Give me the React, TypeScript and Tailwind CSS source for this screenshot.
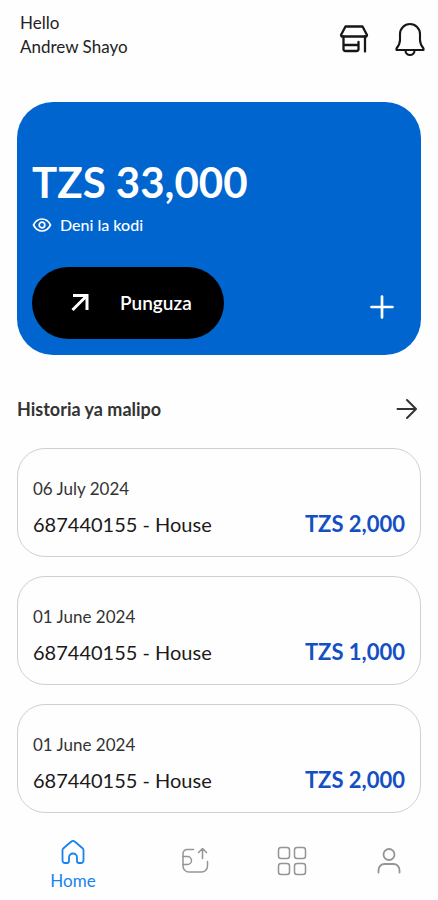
import React from 'react';

interface Payment {
  id: number;
  date: string;
  reference: string;
  amount: string;
}

const payments: Payment[] = [
  { id: 1, date: '06 July 2024', reference: '687440155 - House', amount: 'TZS 2,000' },
  { id: 2, date: '01 June 2024', reference: '687440155 - House', amount: 'TZS 1,000' },
  { id: 3, date: '01 June 2024', reference: '687440155 - House', amount: 'TZS 2,000' },
];

const Icon = ({ className, viewBox = '0 0 32 32', strokeWidth = 2, children }: any) => (
  <svg
    className={className}
    viewBox={viewBox}
    fill="none"
    stroke="currentColor"
    strokeWidth={strokeWidth}
    strokeLinecap="round"
    strokeLinejoin="round"
    aria-hidden="true"
  >
    {children}
  </svg>
);

const StoreIcon = () => (
  <Icon className="size-8" strokeWidth={2.3}>
    <path d="M7.5 3.5h17L29 12l-.5 1.500h-25L3 12z" />
    <path d="M5.500 13.500v12.500a2 2 0 0 0 2 2h11a2 2 0 0 0 2-2v-7M5.500 22h15M27 13.500V28.500" />
  </Icon>
);

const BellIcon = () => (
  <Icon className="size-9" viewBox="0 0 36 36" strokeWidth={2.1}>
    <path d="M8 19v-6a10 10 0 0 1 20 0v6c0 4 1.500 6 3.500 8.500V29H4.500v-1.500C6.500 25 8 23 8 19z" />
    <path d="M13.500 29.500a4.500 4.500 0 0 0 9 0" />
  </Icon>
);

const PaymentCard = ({ payment }: { payment: Payment }) => (
  <li className="rounded-[28px] border border-[#cfcfcf] px-[15px] pt-[30px] pb-[19px]">
    <p className="text-[17px] leading-5 text-[#333]">{payment.date}</p>
    <div className="mt-3 flex items-center justify-between leading-[26px]">
      <span className="text-xl leading-[26px] text-[#1a1a1a]">{payment.reference}</span>
      <span className="text-[22px] leading-[26px] font-bold text-[#1450c4]">{payment.amount}</span>
    </div>
  </li>
);

const BottomNav = () => (
  <nav className="mt-6 grid grid-cols-[3fr_2fr_2fr_2fr] items-start text-[#959595]">
    <a href="#home" className="flex flex-col items-center text-[#1683ee]">
      <Icon className="size-8" strokeWidth={1.8}>
        <path d="M5.500 13.500a3 3 0 0 1 1-2.300l7.500-6.400a3 3 0 0 1 4 0l7.500 6.400a3 3 0 0 1 1 2.300V23.500a2.500 2.500 0 0 1-2.500 2.500h-2a2 2 0 0 1-2-2v-3.500a4 4 0 0 0-8 0V24a2 2 0 0 1-2 2H8a2.500 2.500 0 0 1-2.500-2.500z" />
      </Icon>
      <span className="text-[17px] leading-6">Home</span>
    </a>
    <a href="#payments" aria-label="Payments" className="flex justify-center pt-2">
      <Icon className="size-8" strokeWidth={1.5}>
        <path d="M14.500 4.500H8a4 4 0 0 0-4 4V21a6 6 0 0 0 6 6h12.500a6 6 0 0 0 6-6v-4.500" />
        <path d="M4 11.500h4.500a4 4 0 0 1 0 8H4M23.500 13.500V4M19.500 7.500l4-4 4 4" />
      </Icon>
    </a>
    <a href="#services" aria-label="Services" className="flex justify-center pt-2">
      <Icon className="size-8" strokeWidth={1.5}>
        <rect x="2.500" y="2.500" width="11" height="11" rx="2.500" />
        <rect x="18.500" y="2.500" width="11" height="11" rx="2.500" />
        <rect x="2.500" y="18.500" width="11" height="11" rx="2.500" />
        <rect x="18.500" y="18.500" width="11" height="11" rx="2.500" />
      </Icon>
    </a>
    <a href="#profile" aria-label="Profile" className="flex justify-center pt-2">
      <Icon className="size-8" strokeWidth={1.8}>
        <circle cx="16" cy="9.500" r="5.500" />
        <path d="M5.500 27.500V25a6 6 0 0 1 6-6h9a6 6 0 0 1 6 6v2.500" />
      </Icon>
    </a>
  </nav>
);

const App: React.FC = () => {
  return (
    <div className="min-h-screen bg-[#fefefe] font-['Lato',sans-serif] text-[#222]">
      <header className="flex items-start justify-between pt-[11px] pr-2.5 pl-5">
        <div className="text-[17px] leading-6">
          <p>Hello</p>
          <p>Andrew Shayo</p>
        </div>
        <div className="flex items-center gap-[22px] pt-2.5 text-[#161616]">
          <button type="button" aria-label="Store"><StoreIcon /></button>
          <button type="button" aria-label="Notifications"><BellIcon /></button>
        </div>
      </header>

      <main className="px-[17px]">
        <section className="mt-[43px] rounded-[36px] bg-[#0165cf] px-[15px] pt-14 pb-4 text-white">
          <h1 className="text-[42px] leading-[48px] font-bold">TZS 33,000</h1>
          <div className="mt-[7px] flex items-center gap-2">
            <Icon className="size-5" viewBox="0 0 20 20" strokeWidth={1.7}>
              <path d="M1.500 10C3.500 6 6.500 4 10 4s6.500 2 8.500 6c-2 4-5 6-8.500 6s-6.500-2-8.500-6z" />
              <circle cx="10" cy="10" r="2.800" />
            </Icon>
            <span className="text-base leading-6 font-medium">Deni la kodi</span>
          </div>
          <div className="mt-[30px] flex items-center justify-between">
            <button type="button" className="flex h-[72px] items-center gap-6 rounded-full bg-black px-8 text-[19px] font-semibold">
              <Icon className="size-8" strokeWidth={3}>
                <path d="M9 8.500h14V23M23 8.500L8.500 23" strokeLinecap="butt" strokeLinejoin="miter" />
              </Icon>
              <span>Punguza</span>
            </button>
            <button type="button" aria-label="Add" className="mt-2 mr-2">
              <Icon className="size-8" strokeWidth={2.7}>
                <path d="M16 5.500v21M5.500 16h21" />
              </Icon>
            </button>
          </div>
        </section>

        <section>
          <div className="mt-[38px] flex items-center justify-between">
            <h2 className="text-lg leading-8 font-bold text-[#333]">Historia ya malipo</h2>
            <button type="button" aria-label="View all payments" className="text-[#333]">
              <Icon className="size-8" strokeWidth={2}>
                <path d="M8.500 16h18M18 7l9 9-9 9" />
              </Icon>
            </button>
          </div>
          <ul className="mt-[23px] space-y-[19px]">
            {payments.map(p => <PaymentCard key={p.id} payment={p} />)}
          </ul>
        </section>
      </main>

      <BottomNav />
    </div>
  );
};

export default App;
